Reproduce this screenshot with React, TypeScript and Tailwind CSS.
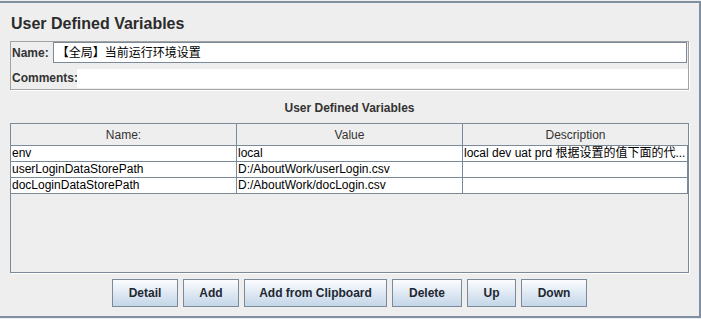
const sans = { fontFamily: '"Liberation Sans", "Noto Sans CJK SC", Arial, sans-serif' };

const rows = [
  { name: "env", value: "local", desc: "local dev uat prd 根据设置的值下面的代..." },
  { name: "userLoginDataStorePath", value: "D:/AboutWork/userLogin.csv", desc: "" },
  { name: "docLoginDataStorePath", value: "D:/AboutWork/docLogin.csv", desc: "" },
];

const buttons = [
  { label: "Detail", w: "w-[66px]" },
  { label: "Add", w: "w-[56px]" },
  { label: "Add from Clipboard", w: "w-[143px]" },
  { label: "Delete", w: "w-[70px]" },
  { label: "Up", w: "w-[49px]" },
  { label: "Down", w: "w-[66px]" },
];

export default function App() {
  return (
    <div className="w-[701px] h-[319px] bg-[#eeeeee] overflow-hidden" style={sans}>
      <div className="mt-px h-[317px] border-t-2 border-r-2 border-b-2 border-[#8090a0]">
        <div className="pl-[11px] pt-[11px] text-[16px] leading-[20px] font-bold text-[#2b2b2b]">
          User Defined Variables
        </div>

        {/* name / comments */}
        <div className="ml-[10px] mt-[7px] w-[679px] h-[49px] border border-[#a3a3a3] shadow-[1px_1px_0_#ffffff] flex flex-col">
          <div className="flex items-center h-[21px] pl-[1px] pr-px">
            <span className="text-[12px] font-bold text-[#333333] mr-[4px]">Name:</span>
            <div className="flex-1 h-[21px] bg-white border border-[#7a8a99] flex items-center pl-[3px] text-[12px] text-black">
              【全局】当前运行环境设置
            </div>
          </div>
          <div className="flex mt-[6px] h-[19px]">
            <span className="text-[12px] font-bold text-[#333333] leading-[19px] pl-px w-[66px] shrink-0">Comments:</span>
            <div className="flex-1 bg-white" />
          </div>
        </div>

        <div className="ml-[10px] w-[679px] mt-[10px] text-center text-[12px] leading-[16px] font-bold text-[#333333]">
          User Defined Variables
        </div>

        {/* table */}
        <div className="ml-[10px] mt-[7px] w-[679px] h-[150px] border border-[#7a8a99] shadow-[1px_1px_0_#ffffff] bg-[#eeeeee]">
          <div className="flex h-[22px] border-b border-[#7a8a99] text-[12px] text-[#333333]">
            <div className="w-[226px] border-r border-[#7a8a99] flex items-center justify-center">Name:</div>
            <div className="w-[226px] border-r border-[#7a8a99] flex items-center justify-center">Value</div>
            <div className="flex-1 flex items-center justify-center">Description</div>
          </div>
          {rows.map((r) => (
            <div key={r.name} className="flex w-[677px] h-[16px] bg-white border-b border-[#7a8a99] text-[12px] leading-[15px] text-black">
              <div className="w-[226px] border-r border-[#7a8a99] pl-px whitespace-nowrap">{r.name}</div>
              <div className="w-[226px] border-r border-[#7a8a99] pl-px whitespace-nowrap">{r.value}</div>
              <div className="w-[225px] border-r border-[#7a8a99] pl-px whitespace-nowrap">{r.desc}</div>
            </div>
          ))}
        </div>

        {/* buttons */}
        <div className="ml-[10px] w-[679px] mt-[6px] flex justify-center gap-[5px]">
          {buttons.map((b) => (
            <div
              key={b.label}
              className={`${b.w} h-[28px] border border-[#7a8a99] bg-gradient-to-b from-[#fbfcfe] to-[#c4d6e8] flex items-center justify-center text-[12px] font-bold text-[#1e2833]`}
            >
              {b.label}
            </div>
          ))}
        </div>
      </div>
    </div>
  );
}
